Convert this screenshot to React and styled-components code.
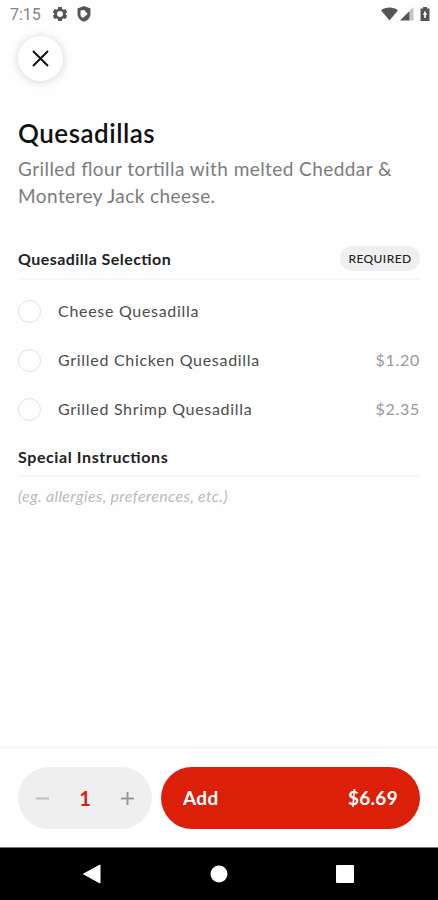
import React from "react";
import styled, { createGlobalStyle } from "styled-components";

const GlobalStyle = createGlobalStyle`
  * {
    box-sizing: border-box;
  }
  body {
    margin: 0;
    background: #fefefe;
    font-family: Lato, "Open Sans", sans-serif;
    font-feature-settings: "liga" 1;
  }
  h1,
  h2,
  p {
    margin: 0;
  }
  button {
    border: 0;
    padding: 0;
    font: inherit;
    background: none;
  }
`;

const Screen = styled.div`
  display: flex;
  flex-direction: column;
  width: 438px;
  height: 900px;
  overflow: hidden;
`;

const StatusBar = styled.header`
  display: flex;
  align-items: center;
  justify-content: space-between;
  height: 28px;
  padding: 0 8px 0 10px;
  color: #555;
  svg {
    display: block;
  }
`;

const StatusGroup = styled.div`
  display: flex;
  align-items: center;
  gap: ${({ $gap }) => $gap}px;
`;

const StatusIcons = styled(StatusGroup)`
  svg:last-child {
    margin-left: 4px;
  }
`;

const Clock = styled.span`
  width: 33px;
  padding-top: 1px;
  font: 400 16px/28px Roboto, sans-serif;
  color: #858585;
`;

const Content = styled.main`
  flex: 1;
  padding: 8px 18px 0;
`;

const CloseButton = styled.button`
  display: flex;
  align-items: center;
  justify-content: center;
  width: 45px;
  height: 45px;
  border-radius: 50%;
  background: #fff;
  box-shadow: 0 1px 10px rgba(0, 0, 0, 0.17);
`;

const Title = styled.h1`
  margin-top: 35px;
  font-size: 26px;
  font-weight: 600;
  line-height: 34px;
  letter-spacing: 0.5px;
  color: #111;
`;

const Description = styled.p`
  margin-top: 5px;
  font-size: 19px;
  line-height: 27px;
  letter-spacing: 0.43px;
  color: #7c7c7c;
`;

const SectionHeader = styled.div`
  display: flex;
  align-items: center;
  justify-content: space-between;
  height: ${({ $height }) => $height}px;
  margin-top: ${({ $top }) => $top}px;
  border-bottom: 2px solid #f7f7f7;
`;

const SectionTitle = styled.h2`
  font-size: 16px;
  font-weight: 700;
  line-height: 24px;
  letter-spacing: ${({ $spacing }) => $spacing}px;
  color: #222;
`;

const Badge = styled.span`
  width: 80px;
  border-radius: 13px;
  background: #efefef;
  font-size: 12px;
  font-weight: 500;
  line-height: 25px;
  letter-spacing: 0.4px;
  text-align: center;
  color: #222;
`;

const Options = styled.div`
  padding-top: 7px;
`;

const Option = styled.div`
  display: flex;
  align-items: center;
  height: 49px;
  font-size: 16px;
  line-height: 20px;
  letter-spacing: 0.7px;
  color: #4c4c4c;
`;

const Radio = styled.span`
  width: 23px;
  height: 23px;
  margin-right: 17px;
  border: 1.5px solid #e2e2e2;
  border-radius: 50%;
`;

const Label = styled.span`
  padding-bottom: 2px;
`;

const Price = styled(Label)`
  margin-left: auto;
  color: #999;
`;

const Placeholder = styled.p`
  margin-top: 7px;
  font-size: 16px;
  font-style: italic;
  line-height: 24px;
  letter-spacing: 0.3px;
  color: #bbb;
`;

const OrderBar = styled.footer`
  display: flex;
  gap: 9px;
  height: 101px;
  padding: 18px 18px 0;
  border-top: 3px solid #f7f7f7;
  background: #fff;
`;

const Stepper = styled.div`
  display: flex;
  align-items: center;
  justify-content: space-between;
  width: 134px;
  height: 62px;
  padding: 0 17px;
  border-radius: 31px;
  background: #efefef;
  svg {
    display: block;
  }
`;

const Quantity = styled.span`
  font-size: 20px;
  font-weight: 700;
  color: #d61f16;
`;

const AddButton = styled.button`
  display: flex;
  flex: 1;
  align-items: center;
  justify-content: space-between;
  height: 62px;
  padding: 0 22px 1px;
  border-radius: 31px;
  background: #db1f09;
  font-size: 19px;
  font-weight: 700;
  letter-spacing: 0.3px;
  color: #fff;
`;

const NavBar = styled.nav`
  display: flex;
  align-items: center;
  justify-content: space-between;
  height: 53px;
  padding: 0 84px 1px 82px;
  border-top: 1px solid #777;
  background: #000;
`;

const GearIcon = () => (
  <svg width="16" height="16" viewBox="0 0 24 24">
    <path
      fill="currentColor"
      fillRule="evenodd"
      d="M9.3 1.5h5.4l.7 3.1 1.7 1 3-1 2.7 4.7-2.4 2.1v1.2l2.4 2.1-2.7 4.7-3-1-1.7 1-.7 3.1H9.3l-.7-3.1-1.7-1-3 1-2.7-4.7 2.4-2.1v-1.2L1.2 9.3l2.7-4.7 3 1 1.7-1zM12 7.5a4.5 4.5 0 1 0 0 9 4.5 4.5 0 0 0 0-9z"
    />
  </svg>
);

const ShieldIcon = () => (
  <svg width="14" height="16" viewBox="0 0 14 16">
    <path
      fill="currentColor"
      fillRule="evenodd"
      d="M7 0l6.5 2.5v5c0 4-2.7 7-6.5 8.3C3.2 14.5.5 11.5.5 7.5v-5zM3.500 4.500v4.200c0 1.700 1.300 2.900 3.200 2.900l4-3.600-3.500-4z"
    />
  </svg>
);

const WifiIcon = () => (
  <svg width="17" height="14" viewBox="0 0 17 14">
    <path fill="currentColor" d="M0 3.300C4.800-.5 12.200-.5 17 3.300L8.500 13.500z" />
  </svg>
);

const SignalIcon = () => (
  <svg width="14" height="14" viewBox="0 0 14 14">
    <path fill="#c4c4c4" d="M13.500 0v13.500H9V4.500z" />
    <path fill="currentColor" d="M0 13.500L9.300 4.200v9.300z" />
  </svg>
);

const BatteryIcon = () => (
  <svg width="10" height="14" viewBox="0 0 10 14">
    <path
      fill="currentColor"
      fillRule="evenodd"
      d="M3 0h4v1.500h2.500V14h-9V1.500H3zM5 3.500L3 8h1.200v3h1.600V8H7z"
    />
  </svg>
);

const options = [
  { name: "Cheese Quesadilla" },
  { name: "Grilled Chicken Quesadilla", price: "$1.20" },
  { name: "Grilled Shrimp Quesadilla", price: "$2.35" },
];

export default () => {
  return (
    <Screen>
      <GlobalStyle />
      <StatusBar>
        <StatusGroup $gap={9}>
          <Clock>7:15</Clock>
          <GearIcon />
          <ShieldIcon />
        </StatusGroup>
        <StatusIcons $gap={2}>
          <WifiIcon />
          <SignalIcon />
          <BatteryIcon />
        </StatusIcons>
      </StatusBar>
      <Content>
        <CloseButton aria-label="Close">
          <svg width="17" height="17" viewBox="0 0 17 17">
            <path d="M1 1l15 15M16 1L1 16" stroke="#111" strokeWidth="2" />
          </svg>
        </CloseButton>
        <Title>Quesadillas</Title>
        <Description>
          Grilled flour tortilla with melted Cheddar & Monterey Jack cheese.
        </Description>
        <SectionHeader $top={30} $height={41}>
          <SectionTitle $spacing={0.45}>Quesadilla Selection</SectionTitle>
          <Badge>REQUIRED</Badge>
        </SectionHeader>
        <Options>
          {options.map(({ name, price }) => (
            <Option key={name}>
              <Radio />
              <Label>{name}</Label>
              {price && <Price>{price}</Price>}
            </Option>
          ))}
        </Options>
        <SectionHeader $top={4} $height={39}>
          <SectionTitle $spacing={0.6}>Special Instructions</SectionTitle>
        </SectionHeader>
        <Placeholder>(eg. allergies, preferences, etc.)</Placeholder>
      </Content>
      <OrderBar>
        <Stepper>
          <svg width="15" height="15" viewBox="0 0 15 15">
            <path d="M1 7.500h13" stroke="#bdbdbd" strokeWidth="2" />
          </svg>
          <Quantity>1</Quantity>
          <svg width="15" height="15" viewBox="0 0 15 15">
            <path d="M1 7.500h13M7.500 1v13" stroke="#999" strokeWidth="2" />
          </svg>
        </Stepper>
        <AddButton>
          <span>Add</span>
          <span>$6.69</span>
        </AddButton>
      </OrderBar>
      <NavBar>
        <svg width="19" height="20" viewBox="0 0 19 20">
          <path d="M1.500 10L18 1v18z" fill="#fff" stroke="#fff" strokeLinejoin="round" />
        </svg>
        <svg width="18" height="18" viewBox="0 0 18 18">
          <circle cx="9" cy="9" r="8.500" fill="#fff" />
        </svg>
        <svg width="18" height="18" viewBox="0 0 18 18">
          <rect width="18" height="18" rx="1" fill="#fff" />
        </svg>
      </NavBar>
    </Screen>
  );
};
